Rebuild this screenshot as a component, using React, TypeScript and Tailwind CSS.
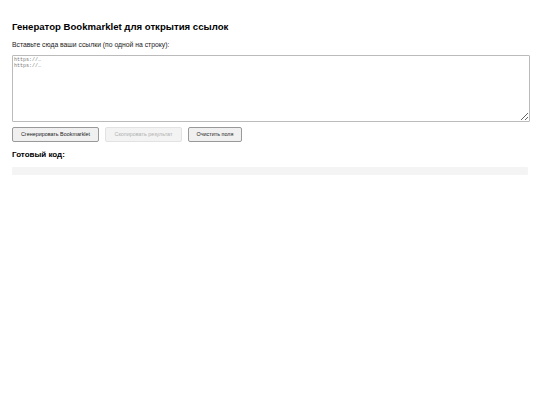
export default function App() {
  return (
    <div className="min-h-[405px] w-[540px] bg-white px-3 pt-[21px] text-black [font-family:'Liberation_Sans',Arial,sans-serif]">
      <h1 className="text-[9.6px] font-bold leading-[12px]">Генератор Bookmarklet для открытия ссылок</h1>
      <p className="mt-[7px] text-[6.8px] leading-[9px] text-[#222]">Вставьте сюда ваши ссылки (по одной на строку):</p>
      <textarea
        className="mt-[6px] block h-[67px] w-[518px] rounded-[1px] border border-[#bbb] px-[1px] py-[1px] text-[5px] leading-[6px] [font-family:'Liberation_Mono',monospace] placeholder:text-[#777]"
        placeholder={'https://…\nhttps://…'}
      />
      <div className="mt-[5px] flex gap-[6px]">
        <button className="h-[15px] w-[87px] rounded-[2px] border border-[#999] bg-[#f0f0f0] text-[5.4px] text-[#222]">
          Сгенерировать Bookmarklet
        </button>
        <button disabled className="h-[15px] w-[77px] rounded-[2px] border border-[#e2e2e2] bg-[#f3f3f3] text-[5.4px] text-[#b0b0b0]">
          Скопировать результат
        </button>
        <button className="h-[15px] w-[54px] rounded-[2px] border border-[#999] bg-[#f0f0f0] text-[5.4px] text-[#222]">
          Очистить поля
        </button>
      </div>
      <h3 className="mt-[8px] text-[8px] font-bold leading-[10px]">Готовый код:</h3>
      <div className="mt-[7px] h-[8px] w-[516px] rounded-[1px] bg-[#f4f4f4]" />
    </div>
  );
}
